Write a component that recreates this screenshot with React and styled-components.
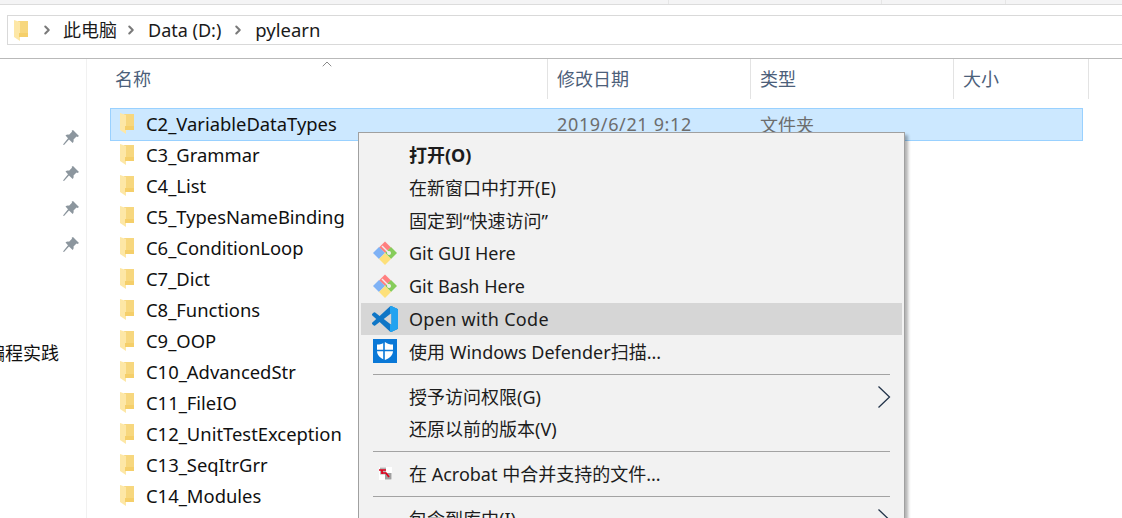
import styled, { createGlobalStyle } from "styled-components"
import { ChevronRight, ChevronUp } from "lucide-react"

const GlobalStyle = createGlobalStyle`
html, body {
    margin: 0;
    height: 100%;
    background: #fff;
    overflow: hidden;
}
* { box-sizing: border-box; }
`

const Page = styled.div`
position: relative;
width: 1122px;
height: 518px;
overflow: hidden;
background: #fff;
font-family: "Noto Sans", "Noto Sans CJK SC", sans-serif;
font-size: 18px;
color: #1a1a1a;
display: flex;
flex-direction: column;
`
const TopStrip = styled.div`
height: 5px;
background: #f4f4f5;
border-bottom: 1px solid #dcdcdc;
flex-shrink: 0;
display: flex;
`
const Tick = styled.span`
width: 1px;
height: 4px;
margin-left: ${p => p.$left}px;
background: #e6e6e6;
`
const AddressArea = styled.div`
height: 54px;
padding: 10px 0 0 7px;
border-bottom: 1px solid #b9b9b9;
flex-shrink: 0;
`
const AddressBar = styled.div`
height: 30px;
display: flex;
align-items: center;
padding-left: 6px;
border: 1px solid #d9d9d9;
border-right: none;
`
const Crumb = styled.span`
line-height: 28px;
font-size: ${p => p.$size || 18}px;
`
const Sep = styled.span`
display: flex;
color: #7a7a7a;
margin: 0 ${p => p.$after}px 0 ${p => p.$before}px;
`
const Body = styled.div`
flex: 1;
display: flex;
min-height: 0;
`
const Nav = styled.div`
width: 87px;
flex-shrink: 0;
border-right: 1px solid #f1f1f1;
padding: 71px 7px 0 0;
display: flex;
flex-direction: column;
align-items: flex-end;
overflow: hidden;
`
const Pin = styled.svg`
width: 16px;
height: 16px;
margin-bottom: 19.6px;
flex-shrink: 0;
`
const NavLabel = styled.div`
margin: 69px 20px 0 0;
white-space: nowrap;
line-height: 24px;
color: #111;
`
const Main = styled.div`
flex: 1;
min-width: 0;
`
const Header = styled.div`
position: relative;
height: 40px;
display: grid;
grid-template-columns: 461px 203px 203px 135px;
`
const HeaderCell = styled.div`
height: 40px;
padding-left: ${p => p.$pad}px;
border-right: 1px solid #e3e3e3;
line-height: 41px;
color: #4c607a;
`
const SortArrow = styled.span`
position: absolute;
left: 232px;
top: -3px;
display: flex;
color: #8a8a8a;
`
const Rows = styled.div`
padding: 9px 0 0 23px;
`
const Row = styled.div`
width: 973px;
height: ${p => (p.$selected ? 33 : 31)}px;
display: flex;
align-items: center;
padding-left: ${p => (p.$selected ? 9 : 10)}px;
padding-bottom: 2px;
background: ${p => (p.$selected ? "#cce8ff" : "transparent")};
border: ${p => (p.$selected ? "1px solid #99d1ff" : "none")};
margin-bottom: ${p => (p.$selected ? -1 : 0)}px;
`
const FolderIcon = styled.svg`
width: 14px;
height: 21px;
margin-right: ${p => p.$gap}px;
flex-shrink: 0;
`
const Name = styled.span`
width: 411px;
color: #101010;
font-size: 18.4px;
white-space: nowrap;
`
const Muted = styled.span`
width: 203px;
color: #6d6d6d;
letter-spacing: ${p => (p.$spaced ? 0.65 : 0)}px;
white-space: nowrap;
`
const Menu = styled.div`
position: absolute;
left: 358px;
top: 132px;
width: 547px;
padding: 5.6px 2px 2px;
background: #f2f2f2;
border: 1px solid #a0a0a0;
box-shadow: 3px 3px 3px rgba(0, 0, 0, 0.3);
`
const Item = styled.div`
height: 32.8px;
display: flex;
align-items: center;
position: relative;
padding-left: 48px;
padding-bottom: ${p => (p.$cjk ? 2 : 0)}px;
background: ${p => (p.$active ? "#d6d6d6" : "transparent")};
font-weight: ${p => (p.$bold ? 700 : 400)};
letter-spacing: ${p => (p.$wide ? 0.3 : 0)}px;
color: #1c1c1c;
white-space: nowrap;
`
const ItemIcon = styled.span`
position: absolute;
left: 11px;
top: 3px;
width: 26px;
height: 26px;
display: flex;
align-items: center;
justify-content: center;
`
const Arrow = styled.svg`
position: absolute;
right: 11px;
top: 5px;
width: 14px;
height: 24px;
`
const Divider = styled.div`
height: 1px;
margin: 5.5px 12px;
background: #a3a3a3;
`

const FolderSvg = ({ gap }) => (
    <FolderIcon $gap={gap} viewBox="0 0 14 21">
        <path d="M4 1h10v16H4z" fill="#f7d77e" />
        <path d="M0 0l6 2v19l-6-4z" fill="#fde7a6" />
        <path d="M5 13h9v4H5z" fill="#f5cf6a" />
    </FolderIcon>
)

const PinSvg = () => (
    <Pin viewBox="0 0 16 16">
        <path d="M10 0l6 6-1.500 1-1-.5-3 3c.4 1.500 0 2.500-.8 3.500L6 9.500 1 15l-1-.5L5 8.300 2.500 5.500c1-.8 2-1.200 3.500-.8l3-3-.3-1z" fill="#8c969e" />
    </Pin>
)

const GitSvg = () => (
    <svg width="26" height="26" viewBox="0 0 26 26">
        <path d="M13 1.500l6 6-6 5.500-6-5.500z" fill="#ff7f7f" />
        <path d="M1 13l6-6 6 6-6 6z" fill="#7fb2f5" />
        <path d="M13 13l6-6 6 6-6 6z" fill="#86cc5a" />
        <path d="M13 13l6 6-6 6-6-6z" fill="#fde07a" />
        <path d="M10 6l8 8" stroke="#eee" strokeWidth="1.500" />
        <circle cx="17" cy="13" r="2" fill="#eee" />
    </svg>
)

const CODE_PATH = "M23.15 2.587L18.21.21a1.494 1.494 0 0 0-1.705.29l-9.46 8.63-4.12-3.128a.999.999 0 0 0-1.276.057L.327 7.261A1 1 0 0 0 .326 8.74L3.899 12 .326 15.26a1 1 0 0 0 .001 1.479L1.65 17.94a.999.999 0 0 0 1.276.057l4.12-3.128 9.46 8.63a1.492 1.492 0 0 0 1.704.29l4.942-2.377A1.5 1.5 0 0 0 24 20.06V3.939a1.5 1.5 0 0 0-.85-1.352zm-5.146 14.861L10.826 12l7.178-5.448v10.896z"

const CodeSvg = () => (
    <svg width="26" height="26" viewBox="0 0 24 24">
        <defs>
            <clipPath id="codeRight"><rect x="16.600" y="0" width="8" height="24" /></clipPath>
        </defs>
        <path d={CODE_PATH} fill="#0f76c6" />
        <path d={CODE_PATH} fill="#22a3f0" clipPath="url(#codeRight)" />
    </svg>
)

const DefenderSvg = () => (
    <svg width="24" height="24" viewBox="0 0 24 24">
        <rect width="24" height="24" fill="#0a78d7" />
        <path d="M12 3c2.500 2 5 2.500 8 2.500V12c0 4.500-3.500 7-8 9-4.500-2-8-4.500-8-9V5.500c3 0 5.500-.5 8-2.500z" fill="#fff" />
        <path d="M11 3v18M3 11.500h18" stroke="#0a78d7" strokeWidth="1.600" />
    </svg>
)

const AcrobatSvg = () => (
    <svg width="13" height="13" viewBox="0 0 13 13">
        <rect width="13" height="13" fill="#fff" />
        <rect x="1" y="0.500" width="6" height="7" fill="#b5b5b5" />
        <rect x="6" y="6" width="6.500" height="6.500" fill="#a0a0a0" />
        <path d="M0 3h7M3 3v4M3 6h4l3 4" stroke="#e0001c" strokeWidth="1.700" fill="none" />
    </svg>
)

const MenuArrow = () => (
    <Arrow viewBox="0 0 14 24">
        <path d="M1.500 1.500L12.500 12 1.500 22.500" fill="none" stroke="#23344a" strokeWidth="1.300" />
    </Arrow>
)

const folders = [
    "C3_Grammar", "C4_List", "C5_TypesNameBinding", "C6_ConditionLoop", "C7_Dict",
    "C8_Functions", "C9_OOP", "C10_AdvancedStr", "C11_FileIO", "C12_UnitTestException",
    "C13_SeqItrGrr", "C14_Modules",
]

const App = () => {
    return (
        <Page>
            <GlobalStyle />
            <TopStrip>
                <Tick $left={668} />
                <Tick $left={212} />
                <Tick $left={123} />
            </TopStrip>
            <AddressArea>
                <AddressBar>
                    <FolderSvg gap={0} />
                    <Sep $before={12} $after={9}><ChevronRight size={14} strokeWidth={3.500} /></Sep>
                    <Crumb>此电脑</Crumb>
                    <Sep $before={7} $after={10}><ChevronRight size={14} strokeWidth={3.500} /></Sep>
                    <Crumb>Data (D:)</Crumb>
                    <Sep $before={10} $after={10}><ChevronRight size={14} strokeWidth={3.500} /></Sep>
                    <Crumb $size={18.500}>pylearn</Crumb>
                </AddressBar>
            </AddressArea>
            <Body>
                <Nav>
                    <PinSvg /><PinSvg /><PinSvg /><PinSvg />
                    <NavLabel>Python编程实践</NavLabel>
                </Nav>
                <Main>
                    <Header>
                        <HeaderCell $pad={28}>名称</HeaderCell>
                        <HeaderCell $pad={9}>修改日期</HeaderCell>
                        <HeaderCell $pad={9}>类型</HeaderCell>
                        <HeaderCell $pad={9}>大小</HeaderCell>
                        <SortArrow><ChevronUp size={16} strokeWidth={1.500} /></SortArrow>
                    </Header>
                    <Rows>
                        <Row $selected>
                            <FolderSvg gap={12} />
                            <Name>C2_VariableDataTypes</Name>
                            <Muted $spaced>2019/6/21 9:12</Muted>
                            <Muted>文件夹</Muted>
                        </Row>
                        {folders.map(f => (
                            <Row key={f}>
                                <FolderSvg gap={12} />
                                <Name>{f}</Name>
                            </Row>
                        ))}
                    </Rows>
                </Main>
            </Body>
            <Menu>
                <Item $bold $cjk>打开(O)</Item>
                <Item $cjk>在新窗口中打开(E)</Item>
                <Item $cjk>固定到“快速访问”</Item>
                <Item><ItemIcon><GitSvg /></ItemIcon>Git GUI Here</Item>
                <Item><ItemIcon><GitSvg /></ItemIcon>Git Bash Here</Item>
                <Item $active $wide><ItemIcon><CodeSvg /></ItemIcon>Open with Code</Item>
                <Item $cjk><ItemIcon><DefenderSvg /></ItemIcon>使用 Windows Defender扫描...</Item>
                <Divider />
                <Item $cjk>授予访问权限(G)<MenuArrow /></Item>
                <Item $cjk>还原以前的版本(V)</Item>
                <Divider />
                <Item $cjk><ItemIcon><AcrobatSvg /></ItemIcon>在 Acrobat 中合并支持的文件...</Item>
                <Divider />
                <Item $cjk>包含到库中(I)<MenuArrow /></Item>
            </Menu>
        </Page>
    )
}

export default App
